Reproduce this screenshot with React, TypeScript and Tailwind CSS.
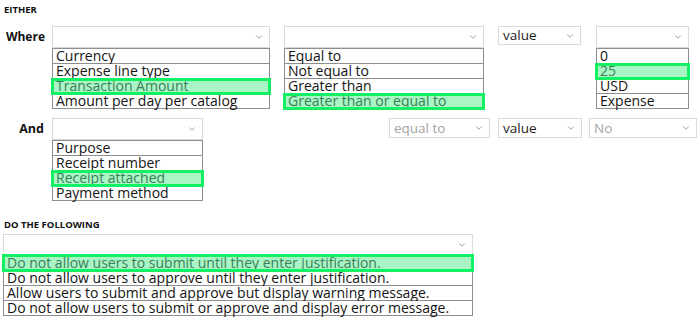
import { ChevronDown } from 'lucide-react';

type SelectProps = {
    value?: string;
    muted?: boolean;
    className?: string;
};

const Select = ({ value = '', muted = false, className = '' }: SelectProps) => (
    <div className={`flex items-center justify-between border border-[#dadada] bg-white pl-[4px] pr-[5px] text-[13.5px] leading-[15px] ${className}`}>
        <span className={muted ? 'text-[#a3a3a3]' : 'text-[#1c1c1c]'}>{value}</span>
        <ChevronDown className="w-[10px] h-[10px] text-[#8a8a8a]" strokeWidth={2} />
    </div>
);

type OptionsProps = {
    items: string[];
    selected: number;
};

const Options = ({ items, selected }: OptionsProps) => (
    <div className="flex flex-col">
        {items.map((item, i) => (
            <div
                key={item}
                className={`border-x border-b border-[#8e8e8e] first:border-t first:h-[16px] h-[15px] px-[3px] text-[14px] leading-[14px] whitespace-nowrap ${
                    i === selected
                        ? 'relative z-10 bg-[#a9f5c6] text-[#3a8056] outline-3 outline-[#14f064] -outline-offset-2'
                        : 'bg-white text-[#141414]'
                }`}
            >
                {item}
            </div>
        ))}
    </div>
);

const Heading = ({ children }: { children: string }) => (
    <div className="h-[12px] pl-[4px] text-[9.5px] leading-[12px] font-bold text-[#111]">{children}</div>
);

export default function App() {
    return (
        <div className="w-[700px] h-[324px] overflow-hidden bg-white pt-[4px] font-['Open_Sans',sans-serif]">
            <Heading>EITHER</Heading>

            {/* Where row */}
            <div className="flex items-start mt-[10px]">
                <div className="w-[52px] h-[22px] flex items-center justify-end pr-[7px] text-[12px] font-bold text-[#111]">Where</div>
                <div className="w-[218px]">
                    <Select className="h-[22px]" />
                    <Options items={['Currency', 'Expense line type', 'Transaction Amount', 'Amount per day per catalog']} selected={2} />
                </div>
                <div className="w-[200px] ml-[14px]">
                    <Select className="h-[22px]" />
                    <Options items={['Equal to', 'Not equal to', 'Greater than', 'Greater than or equal to']} selected={3} />
                </div>
                <Select value="value" className="w-[83px] h-[19px] ml-[14px]" />
                <div className="w-[93px] ml-[15px]">
                    <Select className="h-[22px]" />
                    <Options items={['0', '25', 'USD', 'Expense']} selected={1} />
                </div>
            </div>

            {/* And row */}
            <div className="flex items-start mt-[9px]">
                <div className="w-[52px] h-[22px] flex items-center justify-end pr-[8px] text-[12.5px] font-bold text-[#111]">And</div>
                <div className="w-[151px]">
                    <Select className="h-[22px]" />
                    <Options items={['Purpose', 'Receipt number', 'Receipt attached', 'Payment method']} selected={2} />
                </div>
                <Select value="equal to" muted className="w-[101px] h-[20px] ml-[186px]" />
                <Select value="value" className="w-[84px] h-[20px] ml-[8px]" />
                <Select value="No" muted className="w-[108px] h-[20px] ml-[7px]" />
            </div>

            <div className="mt-[18px]">
                <Heading>DO THE FOLLOWING</Heading>
            </div>
            <div className="w-[470px] ml-[3px] mt-[3px]">
                <Select className="h-[21px]" />
                <Options
                    items={[
                        'Do not allow users to submit until they enter justification.',
                        'Do not allow users to approve until they enter justification.',
                        'Allow users to submit and approve but display warning message.',
                        'Do not allow users to submit or approve and display error message.',
                    ]}
                    selected={0}
                />
            </div>
        </div>
    );
}
